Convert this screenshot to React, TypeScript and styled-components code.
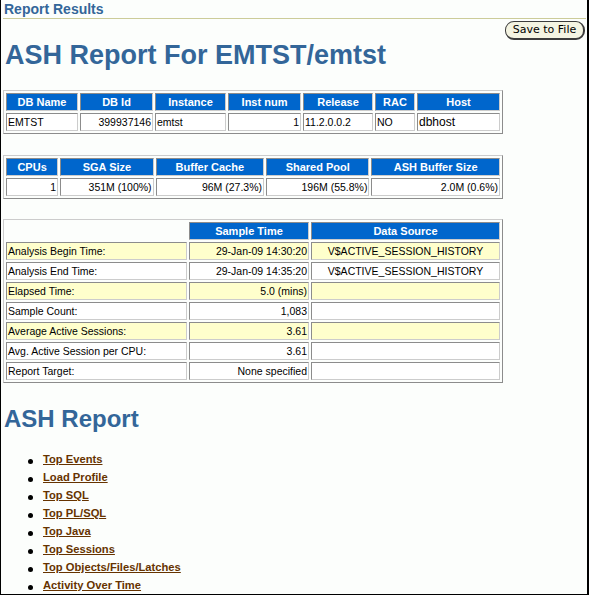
import React from 'react';
import styled, { createGlobalStyle } from 'styled-components';

const Global = createGlobalStyle`
  html, body { margin: 0; padding: 0; background: #ffffff; }
  body { font-family: "Liberation Sans", Arial, sans-serif; }
  *, *::before, *::after { box-sizing: border-box; }
`;

const Page = styled.div`
  width: 589px;
  height: 595px;
  overflow: hidden;
  border-left: 1px solid #000;
  border-right: 2px solid #000;
  border-bottom: 1px solid #000;
  background: #fcfefc;
  font-family: "Liberation Sans", Arial, sans-serif;
`;

const HeaderBar = styled.div`
  margin: 0 1px 0 2px;
  padding: 1px 0 1px 1px;
  border-bottom: 1px solid #cccc99;
  color: #336699;
  font-size: 14px;
  font-weight: bold;
  line-height: 16px;
`;

const ButtonRow = styled.div`
  display: flex;
  justify-content: flex-end;
  margin: 2px 2px 0 0;
`;

const SaveButton = styled.button`
  width: 80px;
  height: 19px;
  padding: 0 0 1px;
  font-family: "DejaVu Sans", sans-serif;
  font-size: 11px;
  line-height: 14px;
  color: #000;
  background: #f4f4e2;
  border: 1px solid #3c3c3c;
  border-right-width: 2px;
  border-bottom-width: 2px;
  border-radius: 9px;
`;

const Title = styled.h1<{ $size: number }>`
  margin: 0 0 0 4px;
  font-size: ${(p) => p.$size}px;
  line-height: 30px;
  font-weight: bold;
  color: #336699;
`;

const Table = styled.table<{ $mt: number }>`
  width: 500px;
  margin: ${(p) => p.$mt}px 0 0 2px;
  table-layout: fixed;
  border-collapse: separate;
  border-spacing: 2px;
  border: 1px solid;
  border-color: #cccccc #8c8c8c #8c8c8c #cccccc;
  font-size: 10.5px;
  color: #000;
`;

const Th = styled.th<{ $blank?: boolean }>`
  height: 18px;
  padding: 0 1px;
  background: ${(p) => (p.$blank ? 'transparent' : '#0066cc')};
  color: #fff;
  font-weight: bold;
  font-size: 11px;
  text-align: center;
  white-space: nowrap;
  border: 1px solid;
  border-color: ${(p) => (p.$blank ? 'transparent' : '#8c8c8c #cccccc #cccccc #8c8c8c')};
`;

const Td = styled.td<{ $align?: 'left' | 'right' | 'center'; $alt?: boolean; $big?: boolean }>`
  height: 18px;
  padding: 0 1px;
  text-align: ${(p) => p.$align || 'left'};
  background: ${(p) => (p.$alt ? '#ffffcc' : '#ffffff')};
  font-size: ${(p) => (p.$big ? '12px' : '10.5px')};
  white-space: nowrap;
  overflow: hidden;
  border: 1px solid;
  border-color: #8c8c8c #cccccc #cccccc #8c8c8c;
`;

const SectionTitle = styled.h2`
  margin: 22px 0 0 3px;
  font-size: 24px;
  line-height: 28px;
  font-weight: bold;
  color: #336699;
`;

const LinkList = styled.ul`
  list-style: none;
  margin: 17px 0 0;
  padding: 0 0 0 27px;
`;

const LinkItem = styled.li`
  display: flex;
  align-items: center;
  height: 18px;
  line-height: 18px;
  &::before {
    content: '';
    width: 5px;
    height: 5px;
    margin: 5px 10px 0 0;
    border-radius: 50%;
    background: #000;
    flex: none;
  }
`;

const ReportLink = styled.a`
  color: #663300;
  font-size: 11.2px;
  font-weight: bold;
  text-decoration: underline;
`;

const dbCols = [72, 73, 71, 73, 70, 40, 83];
const sgaCols = [52, 93, 108, 103, 128];
const timeCols = [181, 120, 189];

type Align = 'left' | 'right' | 'center';

const timeRows: { label: string; time: string; src: string; alt: boolean }[] = [
  { label: 'Analysis Begin Time:', time: '29-Jan-09 14:30:20', src: 'V$ACTIVE_SESSION_HISTORY', alt: true },
  { label: 'Analysis End Time:', time: '29-Jan-09 14:35:20', src: 'V$ACTIVE_SESSION_HISTORY', alt: false },
  { label: 'Elapsed Time:', time: '5.0 (mins)', src: '', alt: true },
  { label: 'Sample Count:', time: '1,083', src: '', alt: false },
  { label: 'Average Active Sessions:', time: '3.61', src: '', alt: true },
  { label: 'Avg. Active Session per CPU:', time: '3.61', src: '', alt: false },
  { label: 'Report Target:', time: 'None specified', src: '', alt: false },
];

const links = [
  'Top Events',
  'Load Profile',
  'Top SQL',
  'Top PL/SQL',
  'Top Java',
  'Top Sessions',
  'Top Objects/Files/Latches',
  'Activity Over Time',
];

const Cols = ({ widths }: { widths: number[] }) => (
  <colgroup>
    {widths.map((w, i) => (
      <col key={i} style={{ width: w }} />
    ))}
  </colgroup>
);

export default function App() {
  const dbHead = ['DB Name', 'DB Id', 'Instance', 'Inst num', 'Release', 'RAC', 'Host'];
  const dbRow: { v: string; a: Align; big?: boolean }[] = [
    { v: 'EMTST', a: 'left' },
    { v: '399937146', a: 'right' },
    { v: 'emtst', a: 'left' },
    { v: '1', a: 'right' },
    { v: '11.2.0.0.2', a: 'left' },
    { v: 'NO', a: 'left' },
    { v: 'dbhost', a: 'left', big: true },
  ];
  const sgaHead = ['CPUs', 'SGA Size', 'Buffer Cache', 'Shared Pool', 'ASH Buffer Size'];
  const sgaRow = ['1', '351M (100%)', '96M (27.3%)', '196M (55.8%)', '2.0M (0.6%)'];

  return (
    <>
      <Global />
      <Page>
        <HeaderBar>Report Results</HeaderBar>
        <ButtonRow>
          <SaveButton type="button">Save to File</SaveButton>
        </ButtonRow>
        <Title $size={27}>ASH Report For EMTST/emtst</Title>

        <Table $mt={20}>
          <Cols widths={dbCols} />
          <thead>
            <tr>
              {dbHead.map((h) => (
                <Th key={h}>{h}</Th>
              ))}
            </tr>
          </thead>
          <tbody>
            <tr>
              {dbRow.map((c, i) => (
                <Td key={i} $align={c.a} $big={c.big}>
                  {c.v}
                </Td>
              ))}
            </tr>
          </tbody>
        </Table>

        <Table $mt={21}>
          <Cols widths={sgaCols} />
          <thead>
            <tr>
              {sgaHead.map((h) => (
                <Th key={h}>{h}</Th>
              ))}
            </tr>
          </thead>
          <tbody>
            <tr>
              {sgaRow.map((v, i) => (
                <Td key={i} $align="right">
                  {v}
                </Td>
              ))}
            </tr>
          </tbody>
        </Table>

        <Table $mt={20}>
          <Cols widths={timeCols} />
          <thead>
            <tr>
              <Th $blank />
              <Th>Sample Time</Th>
              <Th>Data Source</Th>
            </tr>
          </thead>
          <tbody>
            {timeRows.map((r) => (
              <tr key={r.label}>
                <Td $alt={r.alt}>{r.label}</Td>
                <Td $alt={r.alt} $align="right">
                  {r.time}
                </Td>
                <Td $alt={r.alt} $align="center">
                  {r.src}
                </Td>
              </tr>
            ))}
          </tbody>
        </Table>

        <SectionTitle>ASH Report</SectionTitle>
        <LinkList>
          {links.map((l) => (
            <LinkItem key={l}>
              <ReportLink href="#">{l}</ReportLink>
            </LinkItem>
          ))}
        </LinkList>
      </Page>
    </>
  );
}
